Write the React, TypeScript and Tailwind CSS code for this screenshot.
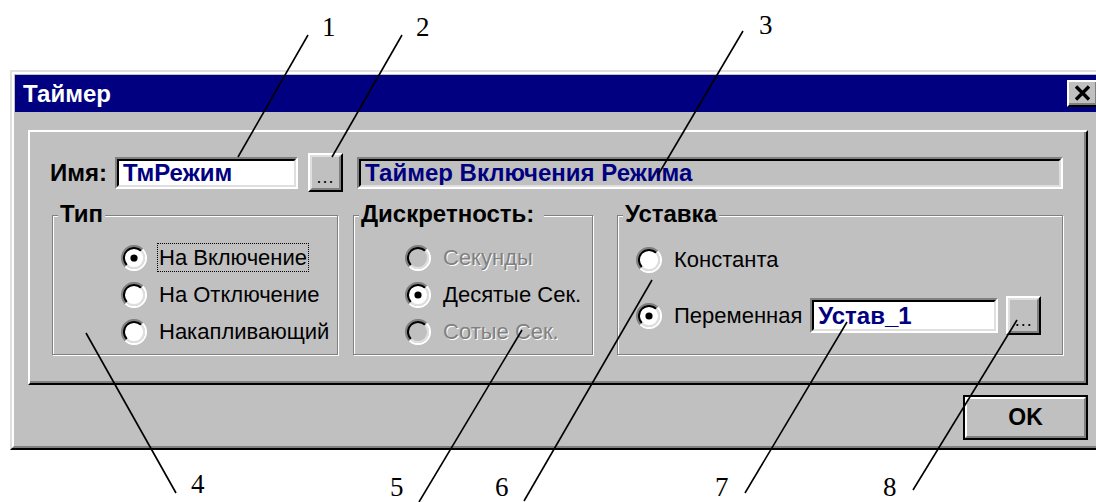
import React from "react";

// Win95-style bevels, drawn at the 2x scale of the dialog
const raisedOuter = "border-2 border-t-white border-l-white border-r-black border-b-black";
const raisedInner = "border-2 border-t-[#dfdfdf] border-l-[#dfdfdf] border-r-[#808080] border-b-[#808080]";
const sunkenOuter = "border-2 border-t-[#808080] border-l-[#808080] border-r-white border-b-white";
const sunkenInner = "border-2 border-t-black border-l-black border-r-[#dfdfdf] border-b-[#dfdfdf]";

const callouts = [
  { n: "1", x1: 308, y1: 35, x2: 238, y2: 157, left: 322, top: 16 },
  { n: "2", x1: 402, y1: 35, x2: 332, y2: 157, left: 416, top: 16 },
  { n: "3", x1: 743, y1: 31, x2: 658, y2: 175, left: 759, top: 14 },
  { n: "4", x1: 86, y1: 333, x2: 176, y2: 493, left: 191, top: 473 },
  { n: "5", x1: 522, y1: 330, x2: 419, y2: 502, left: 390, top: 476 },
  { n: "6", x1: 652, y1: 280, x2: 524, y2: 501, left: 495, top: 476 },
  { n: "7", x1: 847, y1: 322, x2: 745, y2: 493, left: 715, top: 476 },
  { n: "8", x1: 1017, y1: 320, x2: 913, y2: 490, left: 883, top: 476 },
];

function Radio({ checked, disabled }: { checked?: boolean; disabled?: boolean }) {
  return (
    <svg width="26" height="26" viewBox="0 0 26 26" className="shrink-0">
      <circle cx="13" cy="13" r="10" fill={disabled ? "#c0c0c0" : "#ffffff"} />
      <path d="M4.5 21.5 A12 12 0 0 1 21.5 4.5" fill="none" stroke="#808080" strokeWidth="2" />
      <path d="M21.5 4.5 A12 12 0 0 1 4.5 21.5" fill="none" stroke="#ffffff" strokeWidth="2" />
      <path d="M5.9 20.1 A10 10 0 0 1 20.1 5.9" fill="none" stroke="#000000" strokeWidth="2" />
      <path d="M20.1 5.9 A10 10 0 0 1 5.9 20.1" fill="none" stroke="#dfdfdf" strokeWidth="2" />
      {checked && <circle cx="13" cy="13" r="3.6" fill="#000000" />}
    </svg>
  );
}

function Option({
  label,
  checked,
  disabled,
  focused,
}: {
  label: string;
  checked?: boolean;
  disabled?: boolean;
  focused?: boolean;
}) {
  return (
    <div className="flex items-center gap-[10px] h-[37px]">
      <Radio checked={checked} disabled={disabled} />
      <span
        className={`px-[1px] border leading-[27px] text-[22px] ${
          focused ? "border-dotted border-black" : "border-transparent"
        } ${disabled ? "text-[#808080] [text-shadow:1px_1px_0_#ffffff]" : "text-black"}`}
      >
        {label}
      </span>
    </div>
  );
}

function Group({
  title,
  className,
  titleClass,
  children,
}: {
  title: string;
  className: string;
  titleClass?: string;
  children: React.ReactNode;
}) {
  return (
    <div
      className={`relative h-[140px] border border-[#808080] shadow-[inset_1px_1px_0_#ffffff,1px_1px_0_#ffffff] ${className}`}
    >
      <span
        className={`absolute left-[5px] top-[-14px] pl-[2px] pr-[2px] bg-[#c0c0c0] font-bold text-[24px] leading-[24px] text-black ${
          titleClass ?? ""
        }`}
      >
        {title}
      </span>
      {children}
    </div>
  );
}

function DotsButton() {
  return (
    <div className={`w-[35px] h-[39px] bg-[#c0c0c0] ${raisedOuter}`}>
      <div className={`h-full ${raisedInner} flex items-center justify-center`}>
        <span className="text-[18px] leading-none pt-[8px] tracking-[1px]">...</span>
      </div>
    </div>
  );
}

function Field({ value, className, white }: { value: string; className: string; white?: boolean }) {
  return (
    <div className={`${sunkenOuter} ${className}`}>
      <div
        className={`h-full ${sunkenInner} ${
          white ? "bg-white" : "bg-[#c0c0c0]"
        } flex items-center pl-[4px] font-bold text-[24px] leading-none text-[#000080] whitespace-nowrap overflow-hidden`}
      >
        {value}
      </div>
    </div>
  );
}

export default function App() {
  return (
    <div className="relative w-[1096px] h-[502px] overflow-hidden bg-white font-['Liberation_Sans',Arial,sans-serif]">
      {/* dialog window */}
      <div className="ml-[10px] mt-[70px] w-[1096px] bg-[#c0c0c0] border-2 border-t-[#dfdfdf] border-l-[#dfdfdf] border-r-black border-b-black">
        <div className="border-2 border-t-white border-l-white border-r-[#808080] border-b-[#808080] p-[1px]">
          {/* title bar */}
          <div className="h-[37px] bg-[#000080] flex items-center justify-between pl-[8px] pr-[2px]">
            <span className="text-white font-bold text-[24px] leading-none">Таймер</span>
            <div className={`w-[32px] h-[27px] bg-[#c0c0c0] ${raisedOuter}`}>
              <div className="h-full border-r-2 border-b-2 border-r-[#808080] border-b-[#808080] flex items-center justify-center">
                <svg width="17" height="16" viewBox="0 0 17 16">
                  <path d="M2 1.5 L15 14.5 M15 1.5 L2 14.5" stroke="#000000" strokeWidth="3.4" />
                </svg>
              </div>
            </div>
          </div>

          <div className="pt-[18px] px-[13px] pb-[5px]">
            {/* main panel */}
            <div className="h-[255px] border-2 border-t-white border-l-white border-r-black border-b-black shadow-[inset_-2px_-2px_0_#808080]">
              <div className="pt-[21px] pl-[20px] pr-[23px] flex items-center h-[60px]">
                <span className="w-[65px] font-bold text-[24px] leading-none text-black">Имя:</span>
                <Field value="ТмРежим" white className="w-[183px] h-[32px]" />
                <div className="ml-[10px]">
                  <DotsButton />
                </div>
                <Field value="Таймер Включения Режима" className="ml-[14px] flex-1 h-[32px]" />
              </div>

              <div className="mt-[23px] pl-[22px] pr-[23px] flex">
                <Group title="Тип" className="w-[286px]">
                  <div className="flex flex-col pl-[68px] pt-[23px]">
                    <Option label="На Включение" checked focused />
                    <Option label="На Отключение" />
                    <Option label="Накапливающий" />
                  </div>
                </Group>

                <Group title="Дискретность:" titleClass="pr-[10px]" className="ml-[15px] w-[240px]">
                  <div className="flex flex-col pl-[51px] pt-[23px]">
                    <Option label="Секунды" disabled />
                    <Option label="Десятые Сек." checked />
                    <Option label="Сотые Сек." disabled />
                  </div>
                </Group>

                <Group title="Уставка" className="ml-[24px] flex-1">
                  <div className="flex flex-col pl-[18px] pt-[25px]">
                    <Option label="Константа" />
                    <div className="mt-[18px] flex items-center h-[39px]">
                      <Option label="Переменная" checked />
                      <Field value="Устав_1" white className="ml-[6px] w-[188px] h-[35px]" />
                      <div className="ml-[8px]">
                        <DotsButton />
                      </div>
                    </div>
                  </div>
                </Group>
              </div>
            </div>

            {/* OK button */}
            <div className="pt-[10px] flex justify-end">
              <div className="w-[125px] h-[45px] border-2 border-black bg-[#c0c0c0]">
                <div className="h-full border-2 border-t-white border-l-white border-r-[#808080] border-b-[#808080] flex items-center justify-center">
                  <span className="font-bold text-[23px] leading-none text-black">OK</span>
                </div>
              </div>
            </div>
          </div>
        </div>
      </div>

      {/* callout leaders and numbers */}
      <svg className="absolute inset-0 pointer-events-none" width="1096" height="502" viewBox="0 0 1096 502">
        {callouts.map((c) => (
          <line key={c.n} x1={c.x1} y1={c.y1} x2={c.x2} y2={c.y2} stroke="#000000" strokeWidth="1.6" />
        ))}
      </svg>
      {callouts.map((c) => (
        <span
          key={c.n}
          className="absolute font-['Liberation_Serif','Times_New_Roman',serif] text-[27px] leading-[22px] text-black"
          style={{ left: c.left, top: c.top }}
        >
          {c.n}
        </span>
      ))}
    </div>
  );
}
